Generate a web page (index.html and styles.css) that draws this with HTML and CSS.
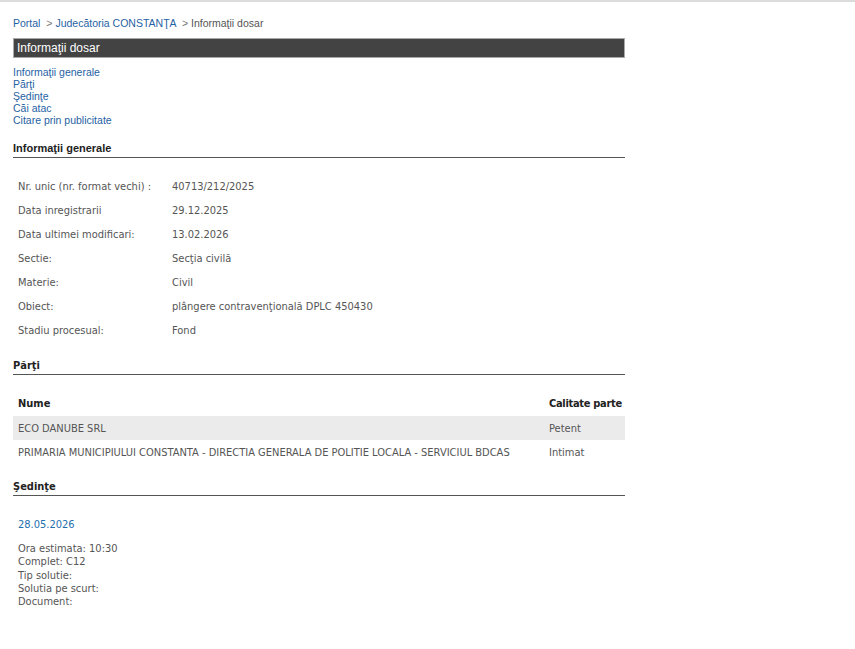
FILE: index.html
```html
<!DOCTYPE html>
<html>
<head>
    <meta charset="UTF-8">
    <title>Informaţii dosar</title>
    <link rel="stylesheet" href="styles.css">
</head>
<body>
    <div class="page">
        <div class="breadcrumb">
            <a href="#">Portal</a>
            <span class="sep">&gt;</span>
            <a href="#">Judecătoria CONSTANŢA</a>
            <span class="sep">&gt;</span>
            <span class="current">Informaţii dosar</span>
        </div>
        <div class="title-bar">Informaţii dosar</div>
        <ul class="toc">
            <li><a href="#generale">Informaţii generale</a></li>
            <li><a href="#parti">Părţi</a></li>
            <li><a href="#sedinte">Şedinţe</a></li>
            <li><a href="#cai">Căi atac</a></li>
            <li><a href="#citare">Citare prin publicitate</a></li>
        </ul>

        <h2 class="section" id="generale">Informaţii generale</h2>
        <table class="info">
            <tr><td class="label">Nr. unic (nr. format vechi) :</td><td>40713/212/2025</td></tr>
            <tr><td class="label">Data inregistrarii</td><td>29.12.2025</td></tr>
            <tr><td class="label">Data ultimei modificari:</td><td>13.02.2026</td></tr>
            <tr><td class="label">Sectie:</td><td>Secţia civilă</td></tr>
            <tr><td class="label">Materie:</td><td>Civil</td></tr>
            <tr><td class="label">Obiect:</td><td>plângere contravenţională DPLC 450430</td></tr>
            <tr><td class="label">Stadiu procesual:</td><td>Fond</td></tr>
        </table>

        <h2 class="section section-verdana" id="parti">Părţi</h2>
        <table class="parti">
            <tr><th>Nume</th><th class="calitate">Calitate parte</th></tr>
            <tr class="odd"><td>ECO DANUBE SRL</td><td class="calitate">Petent</td></tr>
            <tr><td>PRIMARIA MUNICIPIULUI CONSTANTA - DIRECTIA GENERALA DE POLITIE LOCALA - SERVICIUL BDCAS</td><td class="calitate">Intimat</td></tr>
        </table>

        <h2 class="section section-verdana" id="sedinte">Şedinţe</h2>
        <div class="sedinta">
            <div class="sedinta-date">28.05.2026</div>
            <div class="sedinta-info">
                Ora estimata: 10:30<br>
                Complet: C12<br>
                Tip solutie:<br>
                Solutia pe scurt:<br>
                Document:
            </div>
        </div>
    </div>
</body>
</html>
```

FILE: styles.css
```css
html {
    background-color: #FFFFFF;
}
body {
    margin: 0;
    border-top: 2px solid #dcdcdc;
    font-family: "Liberation Sans", Arial, sans-serif;
    font-size: 12px;
    color: #555;
}
a {
    color: #1f62a3;
    text-decoration: none;
}
.page {
    width: 612px;
    margin-left: 13px;
    padding-top: 15px;
}
.breadcrumb {
    height: 13px;
    line-height: 13px;
    font-size: 10.5px;
    color: #555;
}
.breadcrumb .sep {
    color: #777;
    margin: 0 0 0 3px;
}
.title-bar {
    margin-top: 8px;
    height: 18px;
    line-height: 18px;
    background-color: #434343;
    border: 1px solid #a9a9a9;
    color: #FFFFFF;
    padding-left: 3px;
    font-size: 12px;
}
.toc {
    list-style: none;
    margin: 8px 0 0 0;
    padding: 0;
    font-size: 10.5px;
}
.toc li {
    line-height: 12px;
    height: 12px;
}
.section {
    margin: 16px 0 0 0;
    font-size: 11px;
    font-weight: bold;
    color: #222;
    padding-bottom: 2px;
    line-height: 13px;
    border-bottom: 1px solid #555;
}
.section-verdana {
    font-family: "DejaVu Sans Condensed", "DejaVu Sans", sans-serif;
    font-size: 11px;
}
.info, .parti {
    border-collapse: collapse;
    font-family: "DejaVu Sans Condensed", "DejaVu Sans", sans-serif;
    font-size: 11px;
    color: #555;
}
.info {
    margin-top: 16px;
    margin-bottom: 17px;
}
.info td {
    height: 24px;
    padding: 0 0 0 5px;
}
.info td.label {
    width: 149px;
}
.parti {
    width: 100%;
    margin-top: 15px;
    margin-bottom: 9px;
}
.parti th, .parti td {
    height: 24px;
    padding: 0 5px;
    text-align: left;
}
.parti th {
    height: 26px;
    color: #222;
    font-weight: bold;
}
.parti .calitate {
    white-space: nowrap;
    width: 76px;
    padding: 0;
}
.parti th.calitate {
    letter-spacing: -0.3px;
}
.parti tr.odd td {
    background-color: #ebebeb;
}
.sedinta {
    padding: 22px 0 0 5px;
    font-family: "DejaVu Sans Condensed", "DejaVu Sans", sans-serif;
    font-size: 11px;
    color: #555;
}
.sedinta-date {
    color: #1f6fae;
    font-size: 11px;
    margin-bottom: 11px;
}
.sedinta-info {
    line-height: 13.25px;
}
```
